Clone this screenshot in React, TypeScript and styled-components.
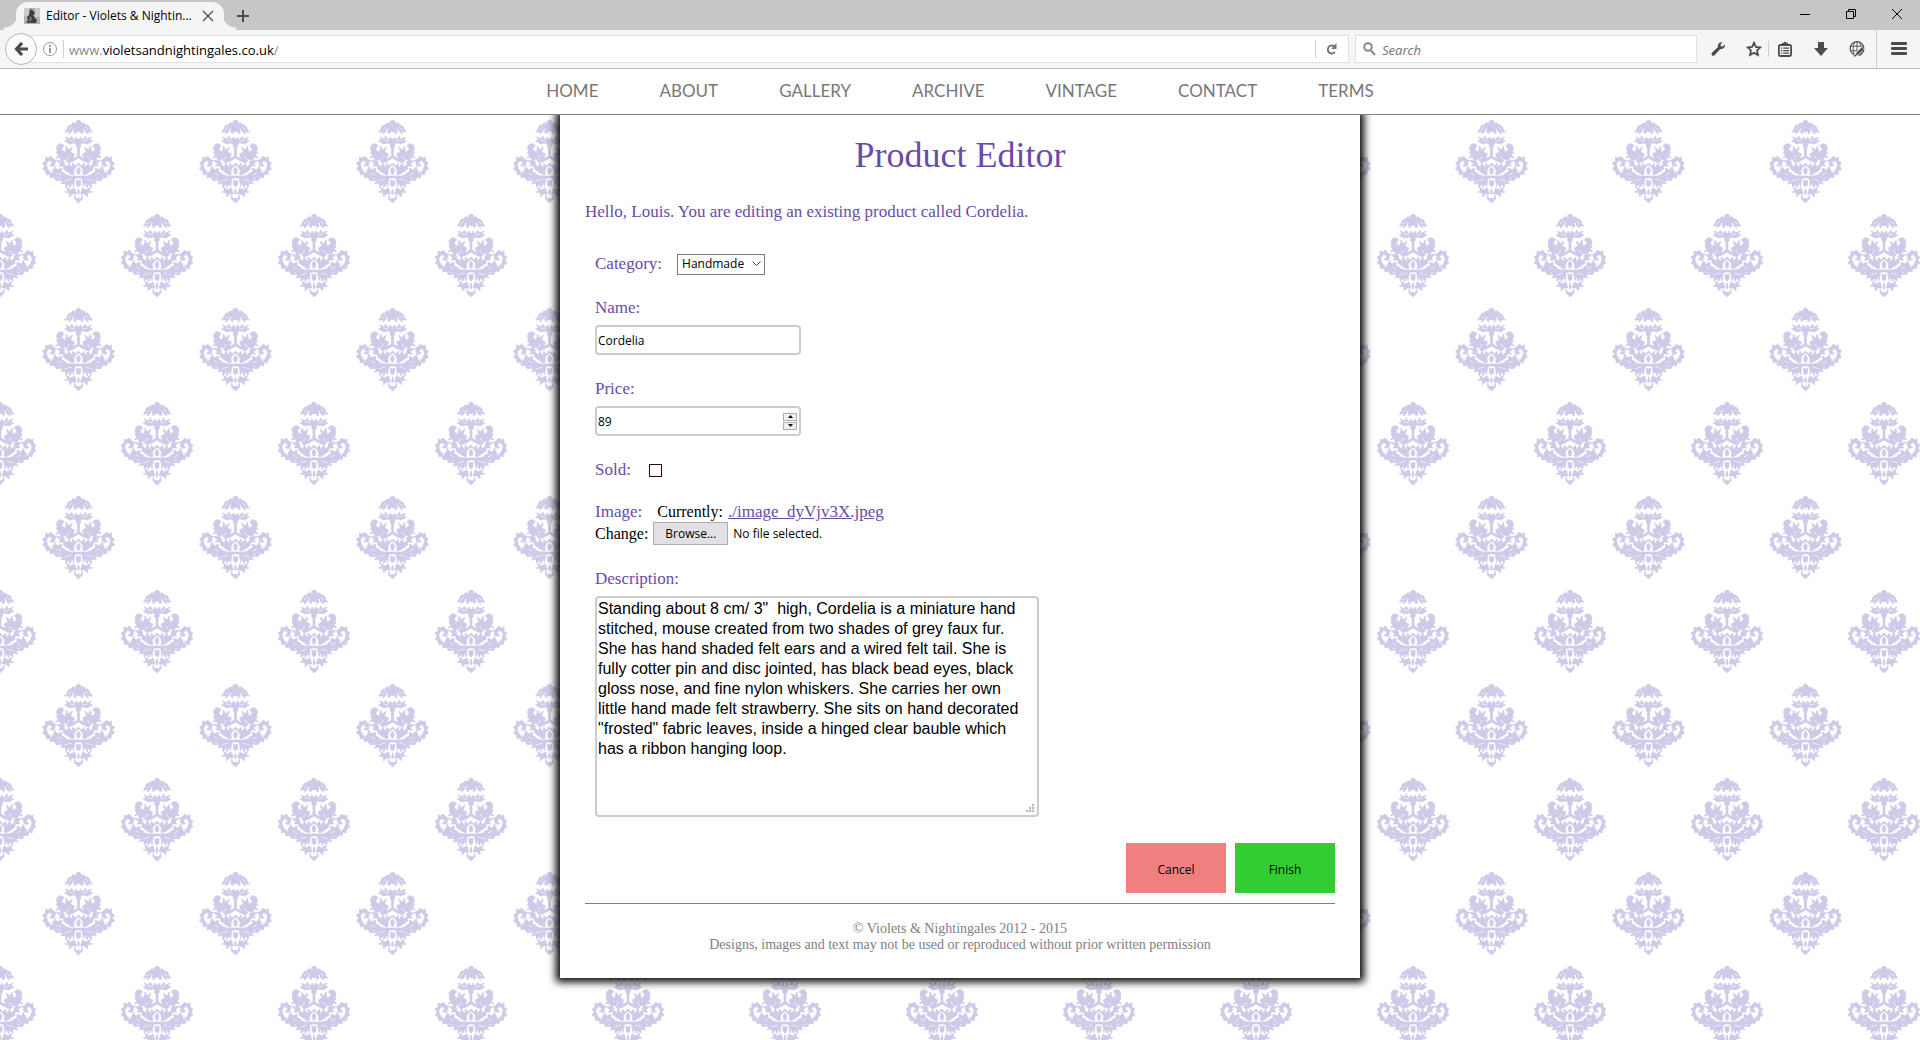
import React from "react";
import styled, { createGlobalStyle } from "styled-components";

const half = `
<g stroke='#d0cae8' stroke-width='.7' stroke-linejoin='round'>
<path d='M0 0L2 1L3 3L2 5L4 3L6 3L7 5L9 5L11 7L12 10L14 12L11 12L9 11L10 14L7 12L6 9L4 8L5 12L3 14L2 11L0 12Z'/>
<path d='M0 20L2 17L4 20L7 16L8 19L13 17L11 20L14 21L9 24L4 23L0 25Z'/>
<path d='M0 23C3 23 3 27 1 28L1 36L6 39L4 34L8 32L6 27L10 30L12 26L13 32C17 31 18 28 14 26C19 20 24 27 21 31L22 33L20 35L23 38L19 37L17 41L14 39L10 43L5 41L0 38Z'/>
<path d='M14 42L17 39L18 41L22 40L18 44L20 46L15 46Z'/>
<path d='M0 43L3 46L6 43L6 48L10 43L11 47L15 44L15 49L11 52L6 55L4 54C6 50 3 47 0 45Z'/>
<path d='M0 47L2 50L1 54L0 54Z'/>
<path d='M25 39L28 36L30 38L33 37L33 41L36 43L34 46L36 49L33 51L32 55L29 54L28 58L25 57L22 61L19 60L22 56L21 52L25 49L26 53L30 50L32 45C31 41 29 40 27 42C26 44 27 45 29 45C26 48 22 45 24 42L22 41Z'/>
<path d='M14 53L17 52L17 48L21 50L24 46L24 52L20 58L16 58L12 56Z'/>
<path d='M0 56L8 56L12 55L15 57L20 60L16 61L18 64L13 63L13 67L9 64L9 68L6 63L5 67L4 60L3 58L0 58Z'/>
<path d='M0 61L2 60L2 65L0 67Z'/>
<path d='M4 68L8 70L12 67L11 71L14 72L9 73L9 77L6 74L2 74Z'/>
<path d='M0 69L1 72L0 75Z'/>
<path d='M0 78L2 79L4 75L4 79L0 83Z'/>
</g>
<path fill='none' stroke='#fff' stroke-width='.6' d='M7 7L10 10M4 21L9 20M9 36L12 40M28 41C33 43 31 49 27 54M17 55L21 53M7 59L14 61'/>`;
const motif = (x: number, y: number) =>
  `<g transform='translate(${x} ${y})'><g>${half}</g><g transform='scale(-1 1)'>${half}</g></g>`;
const damask = encodeURIComponent(
  `<svg xmlns='http://www.w3.org/2000/svg' width='157' height='188' fill='#d0cae8'>${motif(78.5, 51)}${motif(0, 145)}${motif(157, 145)}${motif(0, -43)}${motif(157, -43)}</svg>`
).replace(/'/g, "%27").replace(/\(/g, "%28").replace(/\)/g, "%29");
const grip = encodeURIComponent(
  `<svg xmlns="http://www.w3.org/2000/svg" width="15" height="15" fill="#b4b4b4"><path d="M10 4h2v2h-2zM7 7h2v2H7zM10 7h2v2h-2zM4 10h2v2H4zM7 10h2v2H7zM10 10h2v2h-2z"/></svg>`
);

const purple = "#6a4ba8";
const serif = `Georgia, "Liberation Serif", serif`;
const ui = `"Segoe UI", "Open Sans", sans-serif`;

const Global = createGlobalStyle`
  *, *::before, *::after { box-sizing: border-box; }
  body { margin: 0; background: #fff; font-family: ${serif}; }
`;
const Window = styled.div`
  min-height: 100vh;
  display: flex;
  flex-direction: column;
`;
const TabStrip = styled.div`
  height: 30px;
  display: flex;
  align-items: flex-end;
  background: #c6c6c6;
  font: 12px/18px ${ui};
`;
const Tab = styled.div`
  position: relative;
  display: flex;
  align-items: center;
  gap: 6px;
  width: 208px;
  height: 28px;
  margin-left: 16px;
  padding: 0 4px 0 8px;
  background: #f5f5f5;
  border-radius: 12px 12px 0 0;
  svg { flex-shrink: 0; }
  &::before, &::after {
    content: "";
    position: absolute;
    bottom: 0;
    width: 12px;
    height: 16px;
  }
  &::before { right: 100%; background: radial-gradient(circle at 0 0, transparent 13px, #f5f5f5 14px); }
  &::after { left: 100%; background: radial-gradient(circle at 100% 0, transparent 13px, #f5f5f5 14px); }
`;
const TabTitle = styled.span`
  flex: 1;
  min-width: 0;
  white-space: nowrap;
  color: #000;
`;
const IconButton = styled.button<{ $w?: number }>`
  display: flex;
  flex-shrink: 0;
  align-items: center;
  justify-content: center;
  width: ${(p) => p.$w ?? 24}px;
  height: 28px;
  padding: 0;
  border: 0;
  background: none;
  color: #4c4c4c;
`;
const StarButton = styled(IconButton)`
  padding-left: 10px;
`;
const WindowControls = styled.div`
  display: flex;
  margin-left: auto;
  align-self: flex-start;
`;
const Toolbar = styled.div`
  display: flex;
  align-items: center;
  height: 39px;
  padding-left: 5px;
  background: #f5f5f5;
  border-bottom: 1px solid #bcbcbc;
`;
const BackButton = styled.button`
  display: flex;
  align-items: center;
  justify-content: center;
  z-index: 1;
  width: 32px;
  height: 32px;
  padding: 0;
  border: 1px solid #b9b9b9;
  border-radius: 50%;
  background: #fbfbfb;
`;
const UrlBox = styled.div`
  flex: 1;
  display: flex;
  align-items: center;
  height: 28px;
  margin-left: -8px;
  padding-left: 13px;
  border: 1px solid #e1e1e1;
  background: #fff;
`;
const Url = styled.div`
  flex: 1;
  padding: 2px 0 0 5px;
  font: 13px/20px ${ui};
  color: #000;
  span { color: #8a8a8a; }
`;
const Divider = styled.i<{ $h?: number }>`
  width: 1px;
  height: ${(p) => p.$h ?? 18}px;
  background: #cfcfcf;
`;
const MenuDivider = styled(Divider)`
  margin-left: 4px;
`;
const SiteInfo = styled.span`
  display: flex;
  margin-right: 6px;
`;
const SearchBox = styled.label`
  display: flex;
  align-items: center;
  gap: 6px;
  width: 342px;
  height: 28px;
  margin: 0 9px 0 6px;
  padding-left: 7px;
  border: 1px solid #e1e1e1;
  background: #fff;
  input {
    flex: 1;
    min-width: 0;
    padding: 2px 0 0;
    border: 0;
    outline: 0;
    background: none;
    font: italic 13px/20px ${ui};
  }
  input::placeholder { color: #757575; opacity: 1; }
`;
const Tools = styled.div`
  display: flex;
  align-items: center;
`;
const Page = styled.div`
  flex: 1;
  background: #fff url("data:image/svg+xml,${damask}");
`;
const Nav = styled.nav`
  position: relative;
  display: flex;
  justify-content: center;
  gap: 61px;
  height: 46px;
  padding-top: 10px;
  background: #fff;
  border-bottom: 1px solid #808080;
  a {
    font: 17px/24px Lato, sans-serif;
    color: #777;
    text-decoration: none;
  }
`;
const Sheet = styled.main`
  max-width: 800px;
  margin: 0 auto;
  padding: 20px 25px 25px;
  background: #fff;
  box-shadow: 0 0 8px 4px #000;
  clip-path: inset(0 -16px -16px -16px);
`;
const Title = styled.h1`
  margin: 0 0 25px;
  text-align: center;
  font-size: 36px;
  line-height: 40px;
  font-weight: 400;
  color: ${purple};
`;
const Intro = styled.p`
  margin: 0 0 28px;
  font-size: 17px;
  line-height: 24px;
  color: ${purple};
`;
const Form = styled.form`
  display: flex;
  flex-direction: column;
`;
const Field = styled.div<{ $stack?: boolean; $after: number }>`
  display: flex;
  flex-direction: ${(p) => (p.$stack ? "column" : "row")};
  align-items: ${(p) => (p.$stack ? "flex-start" : "center")};
  gap: ${(p) => (p.$stack ? 5 : 15)}px;
  margin: 0 10px ${(p) => p.$after}px;
`;
const Label = styled.label`
  font-size: 17px;
  line-height: 24px;
  color: ${purple};
`;
const SelectWrap = styled.span`
  display: grid;
  align-items: center;
  select, svg { grid-area: 1 / 1; }
  svg { justify-self: end; margin-right: 4px; pointer-events: none; }
`;
const Select = styled.select`
  appearance: none;
  width: 88px;
  height: 21px;
  padding: 0 4px;
  border: 1px solid #7a7a7a;
  border-radius: 0;
  background: #fff;
  color: #000;
  font: 12px/18px ${ui};
`;
const inputBox = `
  border: 2px solid #ccc;
  border-radius: 4px;
  background: #fff;
  color: #000;
  outline: 0;
`;
const TextInput = styled.input`
  ${inputBox}
  width: 206px;
  height: 30px;
  padding: 0 1px;
  font: 12px/18px ${ui};
  appearance: textfield;
  &::-webkit-inner-spin-button { display: none; }
`;
const NumberWrap = styled.span`
  display: grid;
  align-items: center;
  > * { grid-area: 1 / 1; }
`;
const Spinner = styled.span`
  display: flex;
  flex-direction: column;
  justify-self: end;
  gap: 1px;
  margin-right: 4px;
`;
const Step = styled.button`
  display: flex;
  align-items: center;
  justify-content: center;
  width: 14px;
  height: 8px;
  padding: 0;
  border: 1px solid #adadad;
  background: #f0f0f0;
`;
const Check = styled.input`
  appearance: none;
  width: 13px;
  height: 13px;
  margin: 0 0 0 3px;
  border: 1px solid #2b0a14;
  background: #fff;
`;
const FileField = styled.div`
  margin: 0 10px 22px;
  font-size: 16px;
  line-height: 20px;
  color: #000;
`;
const FileLine = styled.div`
  display: flex;
  align-items: center;
  gap: 5px;
  a { font-size: 17px; color: ${purple}; }
  ${Label} { line-height: 20px; margin-right: 10px; }
`;
const Browse = styled.button`
  width: 75px;
  height: 23px;
  padding: 0;
  border: 1px solid #adadad;
  background: #e3e0e3;
  color: #000;
  font: 12px/18px ${ui};
`;
const FileStatus = styled.span`
  font: 12px/18px ${ui};
`;
const TextArea = styled.textarea`
  ${inputBox}
  width: 444px;
  max-width: 100%;
  height: 221px;
  padding: 1px 17px 0 1px;
  font: 16px/20px Arial, "Liberation Sans", sans-serif;
  resize: both;
  &::-webkit-resizer { background: url("data:image/svg+xml,${grip}") no-repeat; }
`;
const Actions = styled.div`
  display: flex;
  justify-content: flex-end;
  gap: 9px;
  padding-bottom: 10px;
  border-bottom: 1px solid #808080;
`;
const Action = styled.button<{ $color: string }>`
  width: 100px;
  height: 50px;
  padding: 4px 0 0;
  border: 0;
  background: ${(p) => p.$color};
  color: #000;
  font: 12px/18px ${ui};
`;
const Footer = styled.footer`
  padding-top: 17px;
  text-align: center;
  font-size: 14px;
  line-height: 16px;
  color: #808080;
  p { margin: 0; }
`;

const links = ["HOME", "ABOUT", "GALLERY", "ARCHIVE", "VINTAGE", "CONTACT", "TERMS"];
const description = `Standing about 8 cm/ 3"  high, Cordelia is a miniature hand stitched, mouse created from two shades of grey faux fur. She has hand shaded felt ears and a wired felt tail. She is fully cotter pin and disc jointed, has black bead eyes, black gloss nose, and fine nylon whiskers. She carries her own little hand made felt strawberry. She sits on hand decorated "frosted" fabric leaves, inside a hinged clear bauble which has a ribbon hanging loop.`;

function Chrome() {
  return (
    <header>
      <TabStrip>
        <Tab>
          <svg width="16" height="16" viewBox="0 0 16 16">
            <path fill="#b9b1b0" d="M0 0h16v16H0z" />
            <path fill="#d0c9c8" d="M0 0h5v8H0zM11 0h5v9h-5z" />
            <path fill="#3f3d3e" d="M6 1l2 1 2 1 1 3-2 1 2 3 2 2-1 3H4l-2-1 2-2-1-3 2-2z" />
            <path fill="#777" d="M6 8l2 2-1 3-2 1z" />
          </svg>
          <TabTitle>Editor - Violets &amp; Nightin...</TabTitle>
          <IconButton aria-label="Close tab">
            <svg width="12" height="12" viewBox="0 0 12 12" stroke="#4c4c4c" strokeWidth="1.3"><path d="M1 1l10 10M11 1L1 11" /></svg>
          </IconButton>
        </Tab>
        <IconButton aria-label="New tab" $w={38}>
          <svg width="12" height="12" viewBox="0 0 12 12" stroke="#4c4c4c" strokeWidth="2"><path d="M6 0v12M0 6h12" /></svg>
        </IconButton>
        <WindowControls>
          <IconButton aria-label="Minimise" $w={46}>
            <svg width="10" height="10" viewBox="0 0 10 10" stroke="#000"><path d="M0 5.5h10" /></svg>
          </IconButton>
          <IconButton aria-label="Restore" $w={46}>
            <svg width="10" height="10" viewBox="0 0 10 10" stroke="#000" fill="none"><path d="M.5 2.5h7v7h-7zM2.5 2.5v-2h7v7h-2" /></svg>
          </IconButton>
          <IconButton aria-label="Close" $w={46}>
            <svg width="10" height="10" viewBox="0 0 10 10" stroke="#000"><path d="M0 0l10 10M10 0L0 10" /></svg>
          </IconButton>
        </WindowControls>
      </TabStrip>
      <Toolbar>
        <BackButton aria-label="Back">
          <svg width="14" height="14" viewBox="0 0 14 14" fill="none" stroke="#4c4c4c" strokeWidth="3.2"><path d="M8 1L2.500 7 8 13M2.500 7H14" /></svg>
        </BackButton>
        <UrlBox>
          <SiteInfo>
            <svg width="14" height="14" viewBox="0 0 14 14" fill="none" stroke="#999">
              <circle cx="7" cy="7" r="6.5" /><path strokeWidth="2" d="M7 6v5M7 3v2" />
            </svg>
          </SiteInfo>
          <Divider />
          <Url><span>www.</span>violetsandnightingales.co.uk<span>/</span></Url>
          <Divider />
          <IconButton aria-label="Reload" $w={32}>
            <svg width="12" height="12" viewBox="0 0 12 12" fill="none" stroke="#777" strokeWidth="2"><path d="M9 9A4 4 0 1 1 8.500 3.500" /><path fill="#777" stroke="none" d="M10.500 0v6H5z" /></svg>
          </IconButton>
        </UrlBox>
        <SearchBox>
          <svg width="13" height="14" viewBox="0 0 13 14" fill="none" stroke="#8a8a8a" strokeWidth="2"><circle cx="5" cy="5" r="3.8" /><path d="M7.500 8l4.500 5" /></svg>
          <input placeholder="Search" aria-label="Search" />
        </SearchBox>
        <Tools>
          <IconButton aria-label="Developer tools">
            <svg width="14" height="14" viewBox="0 0 14 14" fill="#4c4c4c"><path d="M11.500.3L9.500 2.500l.4 1.700 1.700.4L13.700 2.500c.8 3-1.800 5.300-4.400 4.600L3.500 13.200c-1.600 1.600-4-.8-2.500-2.400l6-5.800C6.300 2 8.700-.4 11.500.3z" /></svg>
          </IconButton>
          <StarButton aria-label="Bookmark this page" $w={38}>
            <svg width="16" height="16" viewBox="0 0 16 16" fill="none" stroke="#4c4c4c" strokeWidth="1.8"><path d="M8 1.800l1.900 4 4.400.6-3.200 3 .8 4.600L8 11.800 4.100 14l.8-4.600-3.200-3 4.400-.6z" /></svg>
          </StarButton>
          <Divider $h={16} />
          <IconButton aria-label="Bookmarks menu" $w={31}>
            <svg width="14" height="15" viewBox="0 0 14 15" fill="none" stroke="#4c4c4c" strokeWidth="1.8"><rect x=".9" y="3" width="12.2" height="11" rx="1.5" /><path d="M4 2.200h6M7 0v2" strokeWidth="2.4" /><path strokeWidth="1.3" d="M3 6.200h1.200M5.200 6.200H11M3 8.700h1.200M5.200 8.700H11M3 11.200h1.200M5.200 11.200H11" /></svg>
          </IconButton>
          <IconButton aria-label="Downloads" $w={41}>
            <svg width="14" height="14" viewBox="0 0 14 14" fill="#4c4c4c"><path d="M4 0h6v6h4l-7 8-7-8h4z" /></svg>
          </IconButton>
          <IconButton aria-label="Web tools" $w={31}>
            <svg width="16" height="16" viewBox="0 0 16 16" fill="none" stroke="#4c4c4c"><circle cx="8" cy="7.5" r="6.8" strokeWidth="1.2" /><path d="M1.500 5.200h13M1.500 9.800h9M8 1v11M5.500 1.500C3.700 5 3.700 10 5.500 13.500M10.500 1.500c1.200 2 1.500 3.500 1.500 5" strokeWidth=".9" /><path stroke="#f5f5f5" strokeWidth="4" d="M14 6.500L6.500 14.500" /><path strokeWidth="2.6" d="M14 7L8 13.200" /><path strokeWidth="1.2" d="M8 13l-2.500 2.500M11 14.500l4-5" /></svg>
          </IconButton>
          <MenuDivider $h={38} />
          <IconButton aria-label="Open menu" $w={43}>
            <svg width="16" height="14" viewBox="0 0 16 14" fill="#4c4c4c"><rect width="16" height="3" rx="1" /><rect y="5" width="16" height="3" rx="1" /><rect y="10" width="16" height="3" rx="1" /></svg>
          </IconButton>
        </Tools>
      </Toolbar>
    </header>
  );
}

export default function App() {
  return (
    <Window>
      <Global />
      <Chrome />
      <Page>
        <Nav>{links.map((l) => <a key={l} href="#">{l}</a>)}</Nav>
        <Sheet>
          <Title>Product Editor</Title>
          <Intro>Hello, Louis. You are editing an existing product called Cordelia.</Intro>
          <Form>
            <Field $after={20}>
              <Label htmlFor="category">Category:</Label>
              <SelectWrap>
                <Select id="category"><option>Handmade</option></Select>
                <svg width="9" height="6" viewBox="0 0 9 6" fill="none" stroke="#444"><path d="M.5.5l4 4 4-4" /></svg>
              </SelectWrap>
            </Field>
            <Field $stack $after={22}>
              <Label htmlFor="name">Name:</Label>
              <TextInput id="name" defaultValue="Cordelia" />
            </Field>
            <Field $stack $after={22}>
              <Label htmlFor="price">Price:</Label>
              <NumberWrap>
                <TextInput id="price" type="number" defaultValue="89" />
                <Spinner>
                  <Step type="button" aria-label="Increase"><svg width="5" height="3" viewBox="0 0 5 3"><path d="M0 3h5L2.500 0z" /></svg></Step>
                  <Step type="button" aria-label="Decrease"><svg width="5" height="3" viewBox="0 0 5 3"><path d="M0 0h5L2.500 3z" /></svg></Step>
                </Spinner>
              </NumberWrap>
            </Field>
            <Field $after={20}>
              <Label htmlFor="sold">Sold:</Label>
              <Check id="sold" type="checkbox" />
            </Field>
            <FileField>
              <FileLine><Label htmlFor="image">Image:</Label>Currently: <a href="#">./image_dyVjv3X.jpeg</a></FileLine>
              <FileLine>Change: <Browse id="image" type="button">Browse...</Browse><FileStatus>No file selected.</FileStatus></FileLine>
            </FileField>
            <Field $stack $after={26}>
              <Label htmlFor="description">Description:</Label>
              <TextArea id="description" defaultValue={description} spellCheck={false} />
            </Field>
            <Actions>
              <Action type="button" $color="#f08080">Cancel</Action>
              <Action type="submit" $color="#32cd32">Finish</Action>
            </Actions>
          </Form>
          <Footer>
            <p>© Violets &amp; Nightingales 2012 - 2015</p>
            <p>Designs, images and text may not be used or reproduced without prior written permission</p>
          </Footer>
        </Sheet>
      </Page>
    </Window>
  );
}
